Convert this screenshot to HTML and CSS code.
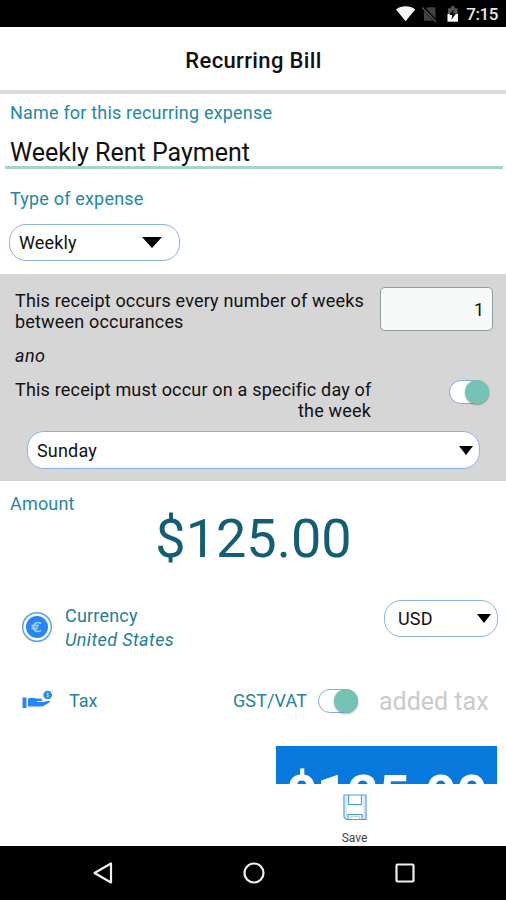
FILE: index.html
```html
<!DOCTYPE html>
<html lang="en">
<head>
<meta charset="utf-8">
<title>Recurring Bill</title>
<link rel="stylesheet" href="styles.css">
</head>
<body>
<div class="status">
  <svg class="wifi" width="20" height="16" viewBox="0 0 20 16"><path d="M0 3.2C5.500-1 14.500-1 20 3.200L10 15.500Z" fill="#f4f4f4"/></svg>
  <svg class="sim" width="16" height="17" viewBox="0 0 16 17"><path d="M6 1H14V15H2V5Z" fill="#414141"/><path d="M1 1L15 16" stroke="#000" stroke-width="3"/><path d="M0 1L14.500 16" stroke="#555" stroke-width="1.400"/></svg>
  <svg class="battery" width="12" height="17" viewBox="0 0 12 17"><path d="M1 9V3Q1 2 2 2H4V0H8V2H10Q11 2 11 3V9Z" fill="#575757"/><path d="M0.500 8H11.500V16H0.500Z" fill="#fff"/><path d="M7 3L2.500 9H5.500L4.500 14L9.500 7.500H6.500Z" fill="#000"/></svg>
  <span class="clock">7:15</span>
</div>
<header class="title">Recurring Bill</header>
<main class="content">
  <section class="general">
    <div class="label name-label">Name for this recurring expense</div>
    <div class="name-input">Weekly Rent Payment</div>
    <div class="label type-label">Type of expense</div>
    <div class="select type-select"><span class="weekly">Weekly</span><i class="arrow arrow-large"></i></div>
  </section>
  <section class="schedule">
    <div class="row every">
      <p class="every-text">This receipt occurs every number of weeks<br>between occurances</p>
      <div class="number">1</div>
    </div>
    <div class="and">ano</div>
    <div class="row specific">
      <p class="specific-text"><span class="specific-line">This receipt must occur on a specific day of</span><br>the week</p>
      <div class="toggle"><i></i></div>
    </div>
    <div class="select day-select"><span class="sunday">Sunday</span><i class="arrow"></i></div>
  </section>
  <section class="amount-block">
    <div class="label amount-label">Amount</div>
    <div class="amount">$125.00</div>
  </section>
  <section class="row currency">
    <svg class="coin" width="32" height="32" viewBox="0 0 32 32"><circle cx="16" cy="16" r="14.300" fill="#fff" stroke="#5f9ff2" stroke-width="1.500"/><circle cx="16" cy="16" r="11" fill="#2786f5"/><path d="M20 12.700A4.500 4.500 0 1 0 20 19.300M10.500 14.700H18M10.500 17.300H17" fill="none" stroke="#a9d1ff" stroke-width="1.700"/></svg>
    <div class="currency-text"><div class="currency-name">Currency</div><em>United States</em></div>
    <div class="select usd-select"><span class="usd">USD</span><i class="arrow"></i></div>
  </section>
  <section class="row tax">
    <svg class="hand" width="32" height="20" viewBox="0 0 32 20"><path d="M0.500 7.500H4.500V18H0.500ZM6 8.500C9 7.500 12 7.500 14 8.500H18.500Q20.500 9 20.500 11H15V12H21L26 11Q28.500 10.500 28 12L22.500 15.500Q21 16.500 19 16.500H6Z" fill="#2586f7"/><circle cx="25.700" cy="5" r="4.300" fill="#2586f7"/><path d="M27.300 3.500H25.200Q24.200 3.500 24.900 4.600L26.700 5.200Q27.200 6.600 26 6.600H24.300M25.700 2.500V7.600" fill="none" stroke="#b4d8ff" stroke-width=".8"/></svg>
    <span class="tax-name">Tax</span>
    <span class="gst">GST/VAT</span>
    <div class="toggle tax-toggle"><i></i></div>
    <span class="added">added tax</span>
  </section>
  <div class="total">$125.00</div>
</main>
<footer class="actions">
  <svg width="24" height="27" viewBox="0 0 24 27"><g fill="none" stroke="#4b9dda" stroke-width="1.200"><path d="M1 1H23V25.500H3.500L1 23Z"/><path d="M3 2V23M21 2V25" stroke="#9bcaf0" stroke-width=".8"/><path d="M5.500 1V10.500H18.500V1M5 25V20.500H19V25"/><path d="M7.500 25V22.500H16.500V25" stroke="#9bcaf0" stroke-width=".8"/></g></svg>
  <span>Save</span>
</footer>
<nav class="nav">
  <svg width="22" height="24" viewBox="0 0 22 24"><path d="M2.500 12L19 2.500V21.500Z" fill="none" stroke="#f0f0f0" stroke-width="2.200" stroke-linejoin="round"/></svg>
  <svg width="24" height="24" viewBox="0 0 24 24"><circle cx="12" cy="12" r="9.500" fill="none" stroke="#f0f0f0" stroke-width="2.200"/></svg>
  <svg width="22" height="22" viewBox="0 0 22 22"><rect x="2.500" y="2.500" width="17" height="17" rx="1" fill="none" stroke="#f0f0f0" stroke-width="2.200"/></svg>
</nav>
</body>
</html>
```
FILE: styles.css
```css
* { box-sizing: border-box; }
body { margin: 0; width: 506px; height: 900px; display: flex; flex-direction: column; overflow: hidden; background: #fff; color: #111; font: 18px/21px Roboto, sans-serif; }
p { margin: 0; }
.status { flex: none; height: 27px; background: #000; display: flex; align-items: flex-start; padding: 6px 8px 0 396px; color: #e8e8e8; }
.sim { margin-left: 7px; }
.battery { margin-left: 9px; }
.clock { margin-left: 8px; font-size: 17px; line-height: 17px; font-weight: 500; letter-spacing: -.4px; white-space: nowrap; }
.title { flex: none; height: 67px; border-bottom: 4px solid #dcdcdc; display: flex; align-items: center; justify-content: center; font-size: 22px; font-weight: 500; padding: 3px 0 0 1px; letter-spacing: .35px; }
.content { height: 690px; flex: none; overflow: hidden; }
.general { height: 180px; padding: 8px 3px 0 5px; }
.label { color: #2388a5; padding-left: 5px; letter-spacing: .19px; }
.name-input { height: 46px; padding: 18px 5px 0; border-bottom: 3px solid #a5d5c5; font-size: 25px; line-height: 24px; }
.type-label { margin-top: 19px; }
.select { background: #fff; border: 1.5px solid #8cb2e3; border-radius: 17px; display: flex; align-items: center; justify-content: space-between; }
.arrow { width: 0; height: 0; border: 7.500px solid transparent; border-top: 9px solid #000; border-bottom: 0; }
.arrow-large { border-width: 11px 10px 0; }
.type-select { width: 171px; height: 37px; margin: 15px 0 0 4px; padding: 0 17px 0 9px; letter-spacing: .15px; }
.schedule { height: 207px; background: #d6d6d6; padding: 13px 13px 0 15px; }
.row { display: flex; }
.every { height: 44px; justify-content: space-between; }
.every-text { padding-top: 3px; letter-spacing: .18px; white-space: nowrap; }
.number { width: 113px; height: 44px; background: #f8f9f9; border: 1.500px solid #8b9ea3; border-radius: 5px; text-align: right; padding: 11px 8px 0; }
.and { font-style: italic; margin-top: 14px; letter-spacing: .4px; }
.specific { margin-top: 13px; height: 44px; justify-content: space-between; }
.specific-text { width: 356px; text-align: right; white-space: nowrap; letter-spacing: .18px; }
.toggle { width: 40px; height: 24px; border: 1.500px solid #83aee6; border-radius: 12px; background: #fff; display: flex; justify-content: flex-end; margin-top: 1px; margin-right: 4px; }
.toggle i { width: 24px; height: 24px; flex: none; margin: -1px -1px 0 0; border-radius: 50%; background: #75c3b6; box-shadow: 0 1px 2px #0005; }
.day-select { width: 453px; height: 38px; margin: 8px 0 0 12px; padding: 0 6px 0 9px; letter-spacing: .18px; }
.amount-block { height: 107px; padding: 12px 0 0 5px; }
.amount { font-size: 54px; line-height: 49px; color: #125e75; text-align: center; padding-right: 4px; }
.currency { height: 84px; padding: 12px 8px 0 21px; }
.coin { margin-top: 11px; }
.currency-text { width: 319px; margin-left: 12px; padding-top: 4px; line-height: 24px; color: #237f94; letter-spacing: .2px; }
.currency-text em { letter-spacing: .4px; }
.usd-select { width: 114px; height: 37px; padding: 0 6px 0 13px; letter-spacing: .15px; }
.tax { height: 73px; padding: 17px 0 0 22px; color: #277f9c; line-height: 24px; }
.hand { margin-top: 1px; }
.tax-name { width: 164px; padding-left: 15px; flex: none; }
.gst { width: 76px; margin-left: 15px; flex: none; letter-spacing: .1px; }
.tax-toggle { flex: none; margin: 0 21px 0 9px; }
.added { font-size: 25px; line-height: 26px; color: #cacaca; white-space: nowrap; }
.total { width: 221px; height: 100px; margin: 1px 0 0 276px; background: #0879dc; color: #fff; font-size: 54px; font-weight: 700; line-height: 98px; text-align: center; }
.actions { flex: none; height: 62px; background: #fff; display: flex; flex-direction: column; align-items: center; padding: 10px 0 0 203px; font-size: 12px; line-height: 14px; color: #444; gap: 10px; }
.nav { flex: none; height: 54px; background: #000; display: flex; align-items: center; justify-content: space-between; padding: 0 90px 0 92px; }
```
